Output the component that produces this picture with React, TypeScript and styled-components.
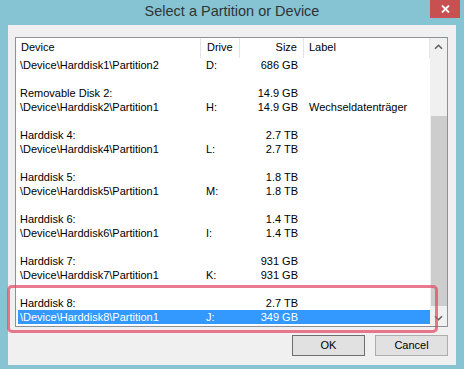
import React, { FC } from "react";
import styled, { createGlobalStyle } from "styled-components";

const GlobalStyle = createGlobalStyle`
  html, body {
    margin: 0;
    padding: 0;
    background: #86c4d3;
  }
`;

// window frame
const Window = styled.div`
  width: 464px;
  height: 369px;
  background: #86c4d3;
  display: flex;
  flex-direction: column;
  font-family: "Liberation Sans", Arial, sans-serif;
  overflow: hidden;
`;

const TitleBar = styled.div`
  height: 25px;
  display: grid;
  grid-template-columns: 1fr auto 1fr;
  align-items: start;
`;

const Title = styled.div`
  grid-column: 2;
  font-size: 14.5px;
  line-height: 22px;
  color: #2f3436;
`;

const CloseButton = styled.div`
  grid-column: 3;
  justify-self: end;
  margin-right: 4px;
  width: 30px;
  height: 18px;
  background: #c75050;
  display: flex;
  align-items: center;
  justify-content: center;
`;

const Client = styled.div`
  position: relative;
  flex: 1;
  margin: 0 8px 4px;
  background: #f0f0f0;
  padding: 12px 8px 0 7px;
  display: flex;
  flex-direction: column;
`;

// list view
const ListBox = styled.div`
  height: 290px;
  box-sizing: border-box;
  border: 1px solid #8e9196;
  background: #fff;
  display: flex;
`;

const ListContent = styled.div`
  flex: 1;
  display: flex;
  flex-direction: column;
  font-size: 11px;
  color: #000;
`;

const HeaderRow = styled.div`
  height: 20px;
  display: grid;
  grid-template-columns: 185px 39px 64px 1fr;
`;

const HeaderCell = styled.div<{ $align?: string; $pad: number }>`
  line-height: 19px;
  border-right: 1px solid #e3e3e3;
  text-align: ${(p) => p.$align || "left"};
  padding: ${(p) => (p.$align === "right" ? `0 ${p.$pad}px 0 0` : `0 0 0 ${p.$pad}px`)};
`;

const Row = styled.div<{ $selected?: boolean }>`
  height: 14px;
  margin-left: 2px;
  display: grid;
  grid-template-columns: 183px 39px 64px 1fr;
  line-height: 14px;
  white-space: nowrap;
  background: ${(p) => (p.$selected ? "#3399ff" : "transparent")};
  color: ${(p) => (p.$selected ? "#fff" : "#000")};
`;

const Cell = styled.div<{ $align?: string; $pad: number }>`
  text-align: ${(p) => p.$align || "left"};
  padding: ${(p) => (p.$align === "right" ? `0 ${p.$pad}px 0 0` : `0 0 0 ${p.$pad}px`)};
  overflow: hidden;
`;

// scrollbar
const ScrollBar = styled.div`
  width: 17px;
  background: #f0f0f0;
  display: flex;
  flex-direction: column;
`;

const ArrowBox = styled.div`
  height: 17px;
  display: flex;
  align-items: center;
  justify-content: center;
`;

const Track = styled.div`
  flex: 1;
  display: flex;
  flex-direction: column;
`;

const Thumb = styled.div<{ $top: number; $height: number }>`
  margin: ${(p) => p.$top}px 0 0 1px;
  height: ${(p) => p.$height}px;
  background: #cdcdcd;
`;

// buttons
const ButtonRow = styled.div`
  display: flex;
  justify-content: flex-end;
  gap: 10px;
  margin-top: 8px;
`;

const Button = styled.div<{ $default?: boolean }>`
  width: 73px;
  height: 21px;
  box-sizing: border-box;
  border: 1px solid ${(p) => (p.$default ? "#6f6f6f" : "#adadad")};
  background: #e1e1e1;
  font-size: 11px;
  line-height: 19px;
  text-align: center;
  color: #000;
`;

// red marker drawn over the screenshot
const Marker = styled.div`
  position: absolute;
  left: -1px;
  top: 260px;
  width: 431px;
  height: 48px;
  box-sizing: border-box;
  border: 3px solid rgba(226, 72, 100, 0.72);
  border-radius: 5px;
  pointer-events: none;
`;

type Item = { device: string; drive?: string; size?: string; label?: string };

const items: Item[] = [
  { device: "\\Device\\Harddisk1\\Partition2", drive: "D:", size: "686 GB" },
  { device: "" },
  { device: "Removable Disk 2:", size: "14.9 GB" },
  { device: "\\Device\\Harddisk2\\Partition1", drive: "H:", size: "14.9 GB", label: "Wechseldatenträger" },
  { device: "" },
  { device: "Harddisk 4:", size: "2.7 TB" },
  { device: "\\Device\\Harddisk4\\Partition1", drive: "L:", size: "2.7 TB" },
  { device: "" },
  { device: "Harddisk 5:", size: "1.8 TB" },
  { device: "\\Device\\Harddisk5\\Partition1", drive: "M:", size: "1.8 TB" },
  { device: "" },
  { device: "Harddisk 6:", size: "1.4 TB" },
  { device: "\\Device\\Harddisk6\\Partition1", drive: "I:", size: "1.4 TB" },
  { device: "" },
  { device: "Harddisk 7:", size: "931 GB" },
  { device: "\\Device\\Harddisk7\\Partition1", drive: "K:", size: "931 GB" },
  { device: "" },
  { device: "Harddisk 8:", size: "2.7 TB" },
  { device: "\\Device\\Harddisk8\\Partition1", drive: "J:", size: "349 GB" },
];

const Chevron: FC<{ down?: boolean }> = ({ down }) => (
  <svg width="9" height="6" viewBox="0 0 9 6">
    <path
      d={down ? "M1 1.2 L4.5 4.7 L8 1.2" : "M1 4.8 L4.5 1.3 L8 4.8"}
      fill="none"
      stroke="#606060"
      strokeWidth="1.6"
    />
  </svg>
);

const App: FC = () => {
  const selected = items.length - 1;
  return (
    <>
      <GlobalStyle />
      <Window>
        <TitleBar>
          <Title>Select a Partition or Device</Title>
          <CloseButton>
            <svg width="9" height="8" viewBox="0 0 9 8">
              <path d="M1 0.5 L8 7.5 M8 0.5 L1 7.5" stroke="#fff" strokeWidth="1.8" />
            </svg>
          </CloseButton>
        </TitleBar>
        <Client>
          <ListBox>
            <ListContent>
              <HeaderRow>
                <HeaderCell $pad={5}>Device</HeaderCell>
                <HeaderCell $pad={6}>Drive</HeaderCell>
                <HeaderCell $align="right" $pad={6}>Size</HeaderCell>
                <HeaderCell $pad={5}>Label</HeaderCell>
              </HeaderRow>
              {items.map((it, i) => (
                <Row key={i} $selected={i === selected}>
                  <Cell $pad={2}>{it.device}</Cell>
                  <Cell $pad={5}>{it.drive}</Cell>
                  <Cell $align="right" $pad={6}>{it.size}</Cell>
                  <Cell $pad={5}>{it.label}</Cell>
                </Row>
              ))}
            </ListContent>
            <ScrollBar>
              <ArrowBox>
                <Chevron />
              </ArrowBox>
              <Track>
                <Thumb $top={61} $height={190} />
              </Track>
              <ArrowBox>
                <Chevron down />
              </ArrowBox>
            </ScrollBar>
          </ListBox>
          <ButtonRow>
            <Button $default>OK</Button>
            <Button>Cancel</Button>
          </ButtonRow>
          <Marker />
        </Client>
      </Window>
    </>
  );
};

export default App;
